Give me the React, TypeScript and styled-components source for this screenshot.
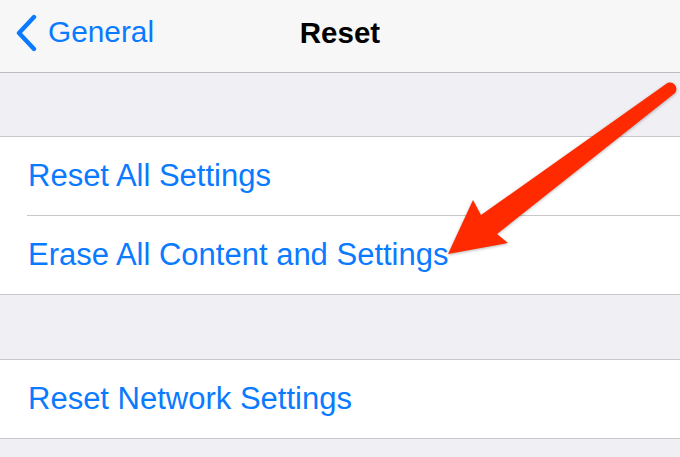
import React from "react";
import styled, { createGlobalStyle } from "styled-components";

const GlobalStyle = createGlobalStyle`
    html, body {
        margin: 0;
        padding: 0;
        background: #efeff4;
    }

    body {
        font-family: "Liberation Sans", Arial, sans-serif;
        -webkit-font-smoothing: antialiased;
    }
`;

type Section = {
    gap: number;
    rows: string[];
};

const sections: Section[] = [
    { gap: 63, rows: ["Reset All Settings", "Erase All Content and Settings"] },
    { gap: 64, rows: ["Reset Network Settings"] },
];


const App: React.FC = () => {
    return (
        <Screen>
            <GlobalStyle />
            <NavBar>
                <BackButton>
                    <svg width="23" height="38" viewBox="0 0 23 38">
                        <path
                            d="M19 3 L4 19 L19 35"
                            fill="none"
                            stroke="#0a7aff"
                            strokeWidth="4.4"
                            strokeLinecap="round"
                            strokeLinejoin="round"
                        />
                    </svg>
                    <span>General</span>
                </BackButton>
                <Title>Reset</Title>
            </NavBar>

            {sections.map((section, i) => (
                <React.Fragment key={i}>
                    <SectionGap $height={section.gap} />
                    <Group>
                        {section.rows.map((label, j) => (
                            <Cell key={label} $last={j === section.rows.length - 1}>
                                <CellLabel>{label}</CellLabel>
                            </Cell>
                        ))}
                    </Group>
                </React.Fragment>
            ))}

            <Arrow width="680" height="457" viewBox="0 0 680 457">
                <path
                    d="M666 84 L481 215 L473 200 L448 254 L508 243 L497 234 L675 93 A6.4 6.4 0 0 0 666 84 Z"
                    fill="#ff2a00"
                />
            </Arrow>
        </Screen>
    );
}



const Screen = styled.div`
    position: relative;
    width: 680px;
    height: 457px;
    overflow: hidden;
    background: #efeff4;
`;


const NavBar = styled.div`
    position: relative;
    height: 72px;
    display: flex;
    align-items: center;
    justify-content: center;
    background: #f7f7f7;
    border-bottom: 1px solid #bcbbc1;
`;


const BackButton = styled.div`
    position: absolute;
    left: 15px;
    top: 14px;
    display: flex;
    align-items: center;
    gap: 10px;
    color: #0a7aff;

    span {
        font-size: 29.8px;
        line-height: 38px;
        margin-top: -3px;
    }
`;


const Title = styled.h1`
    margin: -6px 0 0;
    font-size: 29.5px;
    font-weight: 700;
    color: #000;
`;


const SectionGap = styled.div<{ $height: number }>`
    height: ${(p) => p.$height}px;
    border-bottom: 1px solid #c8c7cc;
`;


const Group = styled.div`
    background: #fff;
    border-bottom: 1px solid #c8c7cc;
`;


const Cell = styled.div<{ $last: boolean }>`
    height: 78px;
    display: flex;
    align-items: center;
    padding-left: 28px;
    position: relative;

    &::after {
        content: "";
        display: ${(p) => (p.$last ? "none" : "block")};
        position: absolute;
        left: 27px;
        right: 0;
        bottom: -1px;
        height: 1px;
        background: #c8c7cc;
    }

    & + & {
        margin-top: 1px;
    }
`;


const CellLabel = styled.span`
    font-size: 31px;
    color: #0a7aff;
`;


const Arrow = styled.svg`
    position: absolute;
    left: 0;
    top: 0;
    pointer-events: none;
    filter: drop-shadow(0 1px 1.5px rgba(0, 0, 0, 0.3));
`;


export default App;
